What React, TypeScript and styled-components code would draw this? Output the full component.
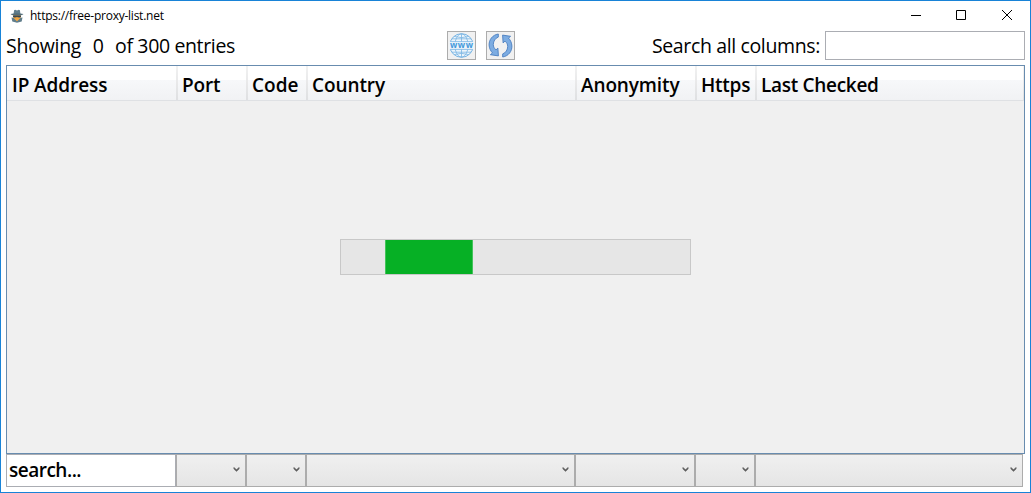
import React from "react";
import styled, { createGlobalStyle } from "styled-components";

const Global = createGlobalStyle`
  *, *::before, *::after { box-sizing: border-box; }
  html, body { margin: 0; padding: 0; background: #fff; overflow: hidden; }
  body { font-family: "Open Sans", "Noto Sans", sans-serif; color: #000; }
`;

const Window = styled.div`
  width: 1031px;
  height: 493px;
  display: flex;
  flex-direction: column;
  border: 1px solid #1883d7;
  background: #fff;
  padding: 0 5px;
`;

const TitleBar = styled.header`
  height: 30px;
  flex: none;
  display: flex;
  align-items: center;
  padding: 0 12px 0 4px;
`;

const Title = styled.span`
  font-size: 12px;
  line-height: 16px;
  letter-spacing: -0.25px;
  margin: 0 auto 0 6px;
  white-space: nowrap;
`;

const WindowControls = styled.div`
  display: flex;
  gap: 34px;
  padding-bottom: 2px;
  svg { display: block; }
`;

const Toolbar = styled.div`
  height: 29px;
  flex: none;
  display: grid;
  grid-template-columns: 1fr auto 1fr;
  align-items: center;
`;

const Label = styled.span<{ $spacing: number }>`
  font-size: 19.5px;
  line-height: 28px;
  white-space: pre;
  letter-spacing: ${(p) => p.$spacing}px;
`;

const Status = styled.div`
  display: flex;
  gap: 11.5px;
`;

const ButtonGroup = styled.div`
  display: flex;
  gap: 10px;
  padding-right: 69px;
`;

const IconButton = styled.button`
  width: 29px;
  height: 29px;
  padding: 1px;
  border: 1px solid #acacac;
  background: #f1f1f1;
  svg { display: block; }
`;

const SearchGroup = styled.label`
  display: flex;
  align-items: center;
  justify-content: flex-end;
  gap: 5px;
`;

const SearchInput = styled.input`
  width: 200px;
  height: 29px;
  border: 1px solid #abadb3;
  background: #fff;
  outline: none;
  padding: 0 4px;
`;

const Table = styled.section`
  width: 1019px;
  height: 389px;
  flex: none;
  margin-top: 5px;
  border: 1px solid #688caf;
  background: #f0f0f0;
  display: flex;
  flex-direction: column;
`;

const HeaderRow = styled.div`
  display: flex;
  height: 35px;
  flex: none;
  border-bottom: 1px solid #dfe1e4;
  background: linear-gradient(#fff 0, #fff 14px, #f7f8fa 14px, #f1f2f4 34px);
`;

const HeaderCell = styled.div<{ $width: number; $spacing: number }>`
  width: ${(p) => p.$width}px;
  flex: none;
  padding: 5px 0 0 4px;
  font-size: 19px;
  font-weight: 600;
  line-height: 28px;
  letter-spacing: ${(p) => p.$spacing}px;
  white-space: nowrap;
  border-right: 2px solid;
  border-image: linear-gradient(#f2f2f2, #dedfe1) 1;
  &:first-child { padding-left: 5px; }
  &:last-child { border-right-width: 1px; }
`;

const TableBody = styled.div`
  flex: 1;
  display: flex;
  justify-content: center;
  padding-top: 138px;
`;

const Progress = styled.div`
  width: 351px;
  height: 36px;
  border: 1px solid #c8c8c8;
  background: #e6e6e6;
  padding-left: 44px;
`;

const ProgressChunk = styled.div`
  width: 88px;
  height: 34px;
  background: #06b025;
  box-shadow: inset 1px 0 #42c35a, inset -1px 0 #42c35a;
`;

const FilterRow = styled.div`
  display: flex;
  height: 33px;
  flex: none;
`;

const FilterText = styled.input`
  width: 170px;
  height: 33px;
  border: 1px solid #abadb3;
  outline: none;
  padding: 0 0 1px 2px;
  font: 600 19px "Open Sans", "Noto Sans", sans-serif;
  letter-spacing: -0.5px;
  color: #000;
`;

const Combo = styled.button<{ $width: number }>`
  width: ${(p) => p.$width}px;
  height: 33px;
  padding: 0 5px 2px 0;
  border: 1px solid #acacac;
  background: linear-gradient(#f0f0f0, #e5e5e5);
  display: flex;
  align-items: center;
  justify-content: flex-end;
`;

const Detective = () => (
  <svg width="14" height="14" viewBox="0 0 14 14">
    <path d="M3.2 5.5h7.6v4.2L7 12.5 3.2 9.7z" fill="#f0a541" />
    <path d="M3.5 5.2 4.1 1.3 5.2.8 7 1.4 8.8.8 9.9 1.3 10.5 5.2z" fill="#607d8b" />
    <path d="M.5 5Q7 3.3 13.5 5 12 6.6 7 6.6T.5 5z" fill="#546e7a" />
    <path d="M3 6.6h8v1.5L9.6 8.6 7.6 8.2 7 7.8l-.6.4-2 .4L3 8.1z" fill="#37474f" />
    <path d="M1.5 8.6 3.4 8.8 7 12.2l3.6-3.4 1.9-.2-.8 3.8L7 13.8 2.3 12.4z" fill="#607d8b" />
    <path d="M4.4 9.2h5.2L7 12z" fill="#f0a541" />
  </svg>
);

const Globe = () => (
  <svg width="25" height="25" viewBox="0 0 25 25" fill="none" stroke="#7ab5e3" strokeWidth="0.8">
    <circle cx="12.5" cy="12.5" r="11.8" fill="#edf5fb" strokeWidth="1" />
    <ellipse cx="12.5" cy="12.5" rx="6.6" ry="11.7" />
    <path d="M12.5.8v23.4M2.8 5.8h19.4M5.2 3.4q7.3 2.5 14.6 0M2.8 19.2h19.4M5.2 21.6q7.3-2.5 14.6 0" />
    <path d="M0 8.6h25v7.8H0z" fill="#eff5fa" stroke="none" />
    <path d="M1.4 8.6h22.2M1.4 16.4h22.2" />
    <text
      x="12.5"
      y="15"
      textAnchor="middle"
      textLength="23"
      fontFamily="Open Sans, sans-serif"
      fontSize="8.5"
      fontWeight="700"
      fill="#4299dc"
      stroke="none"
    >
      www
    </text>
  </svg>
);

const Refresh = () => (
  <svg width="25" height="25" viewBox="0 0 25 25" fill="#7cace2" stroke="#4a7ec0" strokeWidth="0.9" strokeLinejoin="round">
    <path d="M10.3 1C4.3 2 1 6.8 1.1 12c.1 3 1.4 5.9 3.4 7.9L2.4 21.7l8 1.2-.5-7.8-1.9 1.8C6.2 15.4 5.3 13.6 5.3 11.5 5.3 8 7.4 5.2 10.3 4.1z" />
    <path d="M14.7 24c6-1 9.3-5.8 9.2-11-.1-3-1.4-5.9-3.4-7.9l2.1-1.8-8-1.2.5 7.8L17 8.1c1.8 1.5 2.7 3.3 2.7 5.4 0 3.5-2.1 6.3-5 7.4z" />
  </svg>
);

const Chevron = () => (
  <svg width="7" height="5" viewBox="0 0 7 5">
    <path d="M.8.3v1.6l2.7 2.6 2.7-2.6V.3L3.5 2.6z" fill="#606060" stroke="#606060" strokeWidth="0.4" />
  </svg>
);

const columns = [
  { name: "IP Address", width: 171, spacing: -0.1 },
  { name: "Port", width: 70, spacing: -0.2 },
  { name: "Code", width: 60, spacing: 0 },
  { name: "Country", width: 269, spacing: -0.1 },
  { name: "Anonymity", width: 120, spacing: -0.12 },
  { name: "Https", width: 60, spacing: -0.25 },
  { name: "Last Checked", width: 267, spacing: -0.3 },
];

const filters = [70, 60, 269, 120, 60, 268];

export default function App() {
  return (
    <>
      <Global />
      <Window>
        <TitleBar>
          <Detective />
          <Title>https://free-proxy-list.net</Title>
          <WindowControls>
            <svg width="12" height="12" viewBox="0 0 12 12"><path d="M2 6.5h10" stroke="#000" /></svg>
            <svg width="12" height="12" viewBox="0 0 12 12"><path d="M1.5 1.5h9v9h-9z" fill="none" stroke="#000" /></svg>
            <svg width="12" height="12" viewBox="0 0 12 12"><path d="m1 1 10 10M11 1 1 11" stroke="#000" /></svg>
          </WindowControls>
        </TitleBar>
        <Toolbar>
          <Status>
            <Label $spacing={-0.25}>Showing</Label>
            <Label $spacing={-0.3}>0</Label>
            <Label $spacing={-0.36}>of 300 entries</Label>
          </Status>
          <ButtonGroup>
            <IconButton><Globe /></IconButton>
            <IconButton><Refresh /></IconButton>
          </ButtonGroup>
          <SearchGroup>
            <Label $spacing={-0.36}>Search all columns:</Label>
            <SearchInput />
          </SearchGroup>
        </Toolbar>
        <Table>
          <HeaderRow>
            {columns.map((c) => (
              <HeaderCell key={c.name} $width={c.width} $spacing={c.spacing}>{c.name}</HeaderCell>
            ))}
          </HeaderRow>
          <TableBody>
            <Progress><ProgressChunk /></Progress>
          </TableBody>
        </Table>
        <FilterRow>
          <FilterText defaultValue="search..." />
          {filters.map((w, i) => (
            <Combo key={i} $width={w}><Chevron /></Combo>
          ))}
        </FilterRow>
      </Window>
    </>
  );
}
